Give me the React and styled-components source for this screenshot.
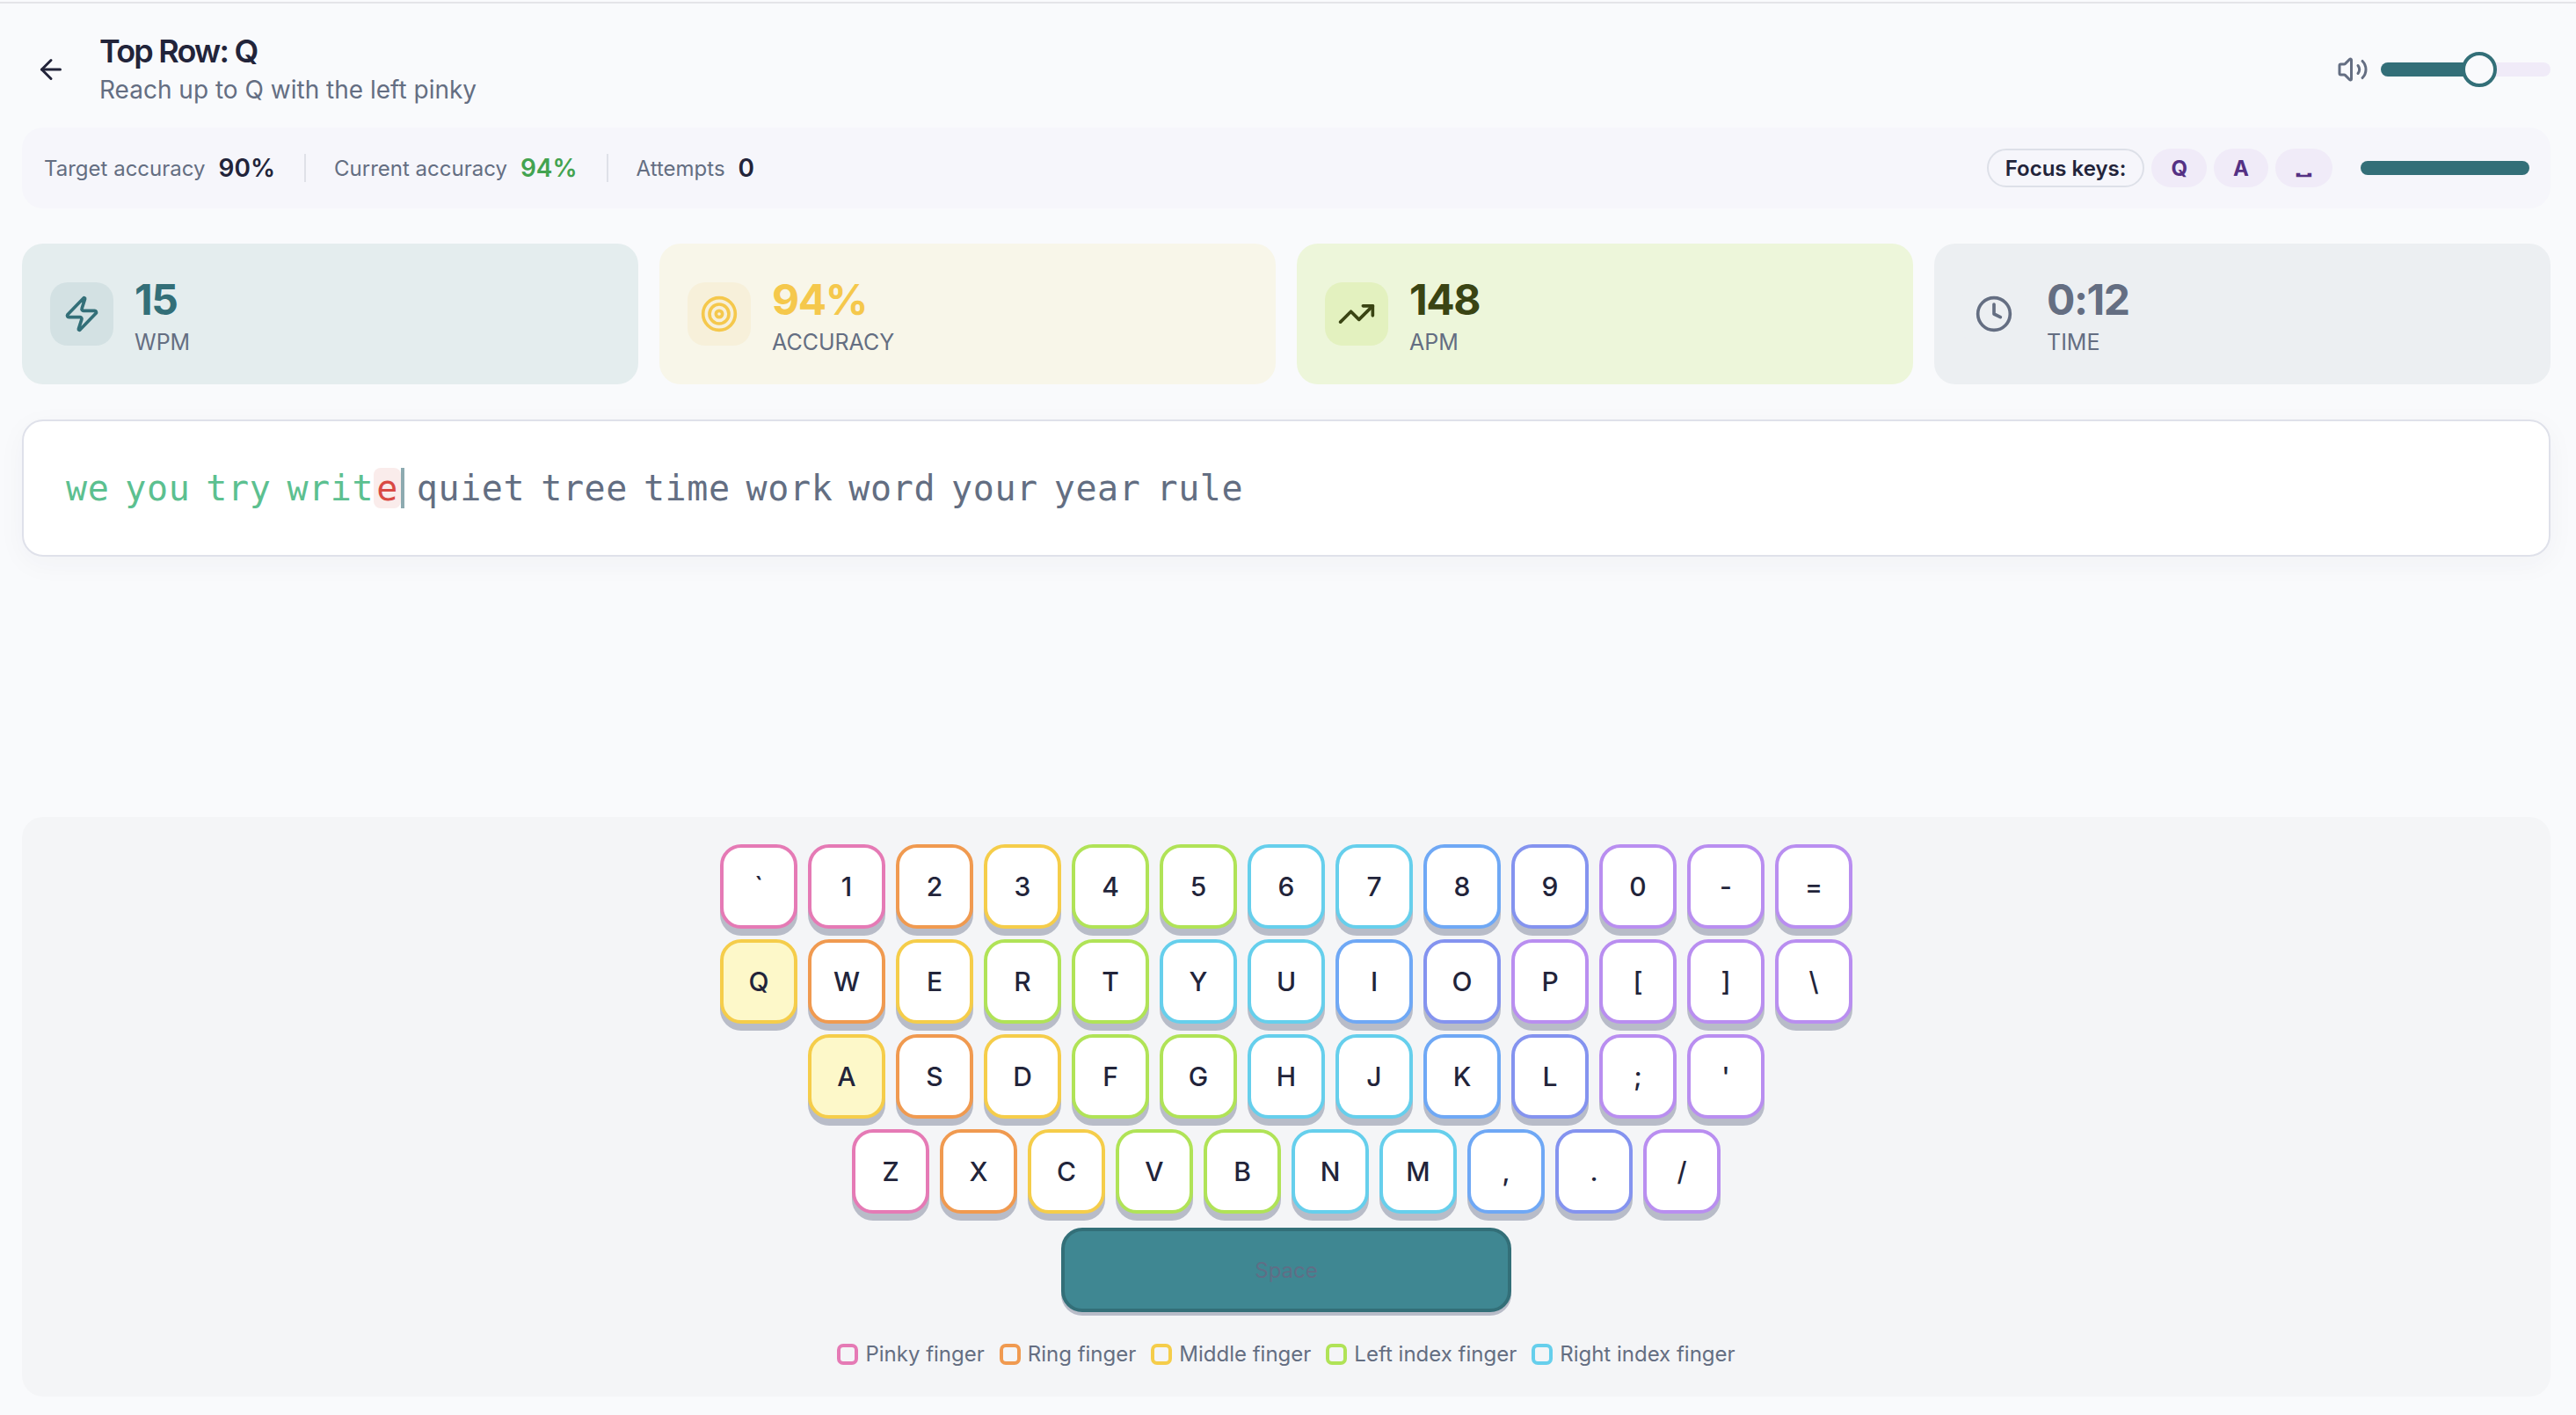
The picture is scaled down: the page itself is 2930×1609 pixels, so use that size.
import React from 'react';
import styled, { createGlobalStyle } from 'styled-components';
import { ArrowLeft, Volume2, Zap, Target, TrendingUp, Clock } from 'lucide-react';

const TEAL = '#336f78';
const SANS = `Inter, "Noto Sans", sans-serif`;

const fingers = {
  pinky: '#e57ab5',
  ring: '#f09a50',
  middle: '#f5cd4a',
  left: '#b0e357',
  right: '#66cfec',
  blue: '#6fa8f5',
  indigo: '#8493ef',
  purple: '#b98ef0',
};

const GlobalStyle = createGlobalStyle`
  html, body {
    margin: 0;
    background: #f9fafc;
    font-family: ${SANS};
    color: #22243a;
  }
`;

const Page = styled.div`
  width: 2930px;
  height: 1609px;
  overflow: hidden;
  display: flex;
  flex-direction: column;
`;

const TopRule = styled.div`
  margin-top: 2px;
  height: 2px;
  background: #e4e4e8;
`;

const Main = styled.main`
  display: flex;
  flex-direction: column;
  padding: 0 29px 0 25px;
`;

const Header = styled.header`
  height: 141px;
  padding: 9px 0 0 15px;
  box-sizing: border-box;
  display: flex;
  align-items: center;
  gap: 37px;
`;

const BackButton = styled.button`
  border: 0;
  padding: 0;
  background: none;
  color: #22243a;
  display: flex;
`;

const TitleBlock = styled.div`
  flex: 1;
`;

const Title = styled.h1`
  margin: 0 0 2px;
  font-size: 36px;
  line-height: 44px;
  font-weight: 600;
  letter-spacing: -0.05em;
`;

const Subtitle = styled.p`
  margin: 0;
  font-size: 28px;
  line-height: 40px;
  color: #646e82;
`;

const Volume = styled.div`
  display: flex;
  align-items: center;
  gap: 14px;
  color: #646e82;
`;

const SliderTrack = styled.div`
  position: relative;
  width: 193px;
  height: 16px;
  border-radius: 8px;
  background: #f0ebf8;
`;

const SliderFill = styled.div`
  height: 100%;
  border-radius: 8px;
  background: ${TEAL};
`;

const SliderThumb = styled.div`
  position: absolute;
  top: -12px;
  width: 40px;
  height: 40px;
  margin-left: -20px;
  box-sizing: border-box;
  border-radius: 50%;
  border: 4px solid ${TEAL};
  background: #f9fafc;
`;

const StatusBar = styled.section`
  height: 92px;
  padding: 0 24px 0 25px;
  box-sizing: border-box;
  display: flex;
  align-items: center;
  border-radius: 24px;
  background: #f6f6fb;
`;

const Metric = styled.div`
  display: flex;
  align-items: center;
  gap: 15px;
`;

const MetricLabel = styled.span`
  font-size: 24px;
  color: #646e82;
`;

const MetricValue = styled.span`
  font-size: 28px;
  font-weight: 600;
  color: ${(p) => p.$color || '#22243a'};
`;

const Divider = styled.span`
  width: 2px;
  height: 32px;
  margin: 0 32px 0 33px;
  background: #dfe1e8;
`;

const FocusGroup = styled.div`
  margin-left: auto;
  display: flex;
  align-items: center;
  gap: 8px;
`;

const FocusLabel = styled.span`
  height: 44px;
  padding: 0 19px;
  box-sizing: border-box;
  display: flex;
  align-items: center;
  border: 2px solid #dde0e8;
  border-radius: 22px;
  font-size: 24px;
  font-weight: 600;
`;

const FocusChip = styled.span`
  height: 44px;
  min-width: ${(p) => (p.$wide ? '65px' : '61px')};
  padding: 0 22px;
  box-sizing: border-box;
  display: flex;
  align-items: center;
  justify-content: center;
  border-radius: 22px;
  background: #f0ebf8;
  color: #553184;
  font-size: 24px;
  font-weight: 700;
`;

const SpaceGlyph = styled.span`
  display: inline-block;
  font-family: "DejaVu Sans", sans-serif;
  font-size: 28px;
  line-height: 1;
  transform: translateY(-2px) scale(1.5, 0.75);
`;

const ProgressBar = styled.div`
  width: 192px;
  height: 16px;
  margin-left: 32px;
  border-radius: 8px;
  background: ${TEAL};
`;

const StatGrid = styled.section`
  margin-top: 40px;
  display: grid;
  grid-template-columns: repeat(4, 1fr);
  gap: 24px;
`;

const StatCard = styled.div`
  height: 160px;
  padding: 0 32px;
  box-sizing: border-box;
  display: flex;
  align-items: center;
  gap: 24px;
  border-radius: 24px;
  background: ${(p) => p.$bg};
`;

const StatIcon = styled.div`
  width: 72px;
  height: 72px;
  display: flex;
  align-items: center;
  justify-content: center;
  border-radius: 20px;
  background: ${(p) => p.$bg};
  color: ${(p) => p.$color};
`;

const StatText = styled.div`
  padding-top: 4px;
`;

const StatValue = styled.div`
  font-size: 48px;
  line-height: 56px;
  font-weight: 700;
  letter-spacing: -0.03em;
  color: ${(p) => p.$color};
`;

const StatLabel = styled.div`
  margin-top: 4px;
  font-size: 25px;
  line-height: 32px;
  color: #646e82;
`;

const TypingBox = styled.section`
  margin-top: 40px;
  height: 156px;
  padding: 0 48px;
  box-sizing: border-box;
  display: flex;
  align-items: center;
  border: 2px solid #dfe1ea;
  border-radius: 24px;
  background: #fff;
  box-shadow: 0 8px 32px rgba(40, 50, 80, 0.04);
  font-family: "DejaVu Sans Mono", monospace;
  font-size: 40px;
  letter-spacing: 0.6px;
  word-spacing: -6.7px;
  white-space: pre;
  color: #636e82;
`;

const Typed = styled.span`
  color: #5cc090;
`;

const Wrong = styled.span`
  position: relative;
  padding: 0 3px;
  border-radius: 8px;
  background: #faeceb;
  color: #d94a44;

  &::after {
    content: '';
    position: absolute;
    top: 0;
    bottom: 0;
    right: -4px;
    width: 4px;
    background: #8daab0;
  }
`;

const KeyboardPanel = styled.section`
  margin-top: 296px;
  height: 659px;
  padding-top: 31px;
  box-sizing: border-box;
  display: flex;
  flex-direction: column;
  align-items: center;
  gap: 12px;
  border-radius: 24px;
  background: #f4f5f7;
`;

const KeyRow = styled.div`
  display: flex;
  gap: 12px;
`;

const Key = styled.div`
  width: 88px;
  height: 96px;
  box-sizing: border-box;
  display: flex;
  align-items: center;
  justify-content: center;
  border: 4px solid ${(p) => fingers[p.$finger]};
  border-radius: 24px;
  background: ${(p) => (p.$focus ? '#fdf8c9' : '#fff')};
  box-shadow: 0 8px 0 #b8bcc8;
  font-size: 30px;
  font-weight: 500;
  color: #22243a;
`;

const SpaceKey = styled.div`
  width: 512px;
  height: 96px;
  margin-top: 4px;
  box-sizing: border-box;
  display: flex;
  align-items: center;
  justify-content: center;
  border: 4px solid ${TEAL};
  border-radius: 24px;
  background: #3f8792;
  box-shadow: 0 4px 0 #b8bcc8;
  font-size: 24px;
  color: #5f6e86;
`;

const Legend = styled.div`
  margin-top: 20px;
  display: flex;
  gap: 17px;
`;

const LegendItem = styled.div`
  display: flex;
  align-items: center;
  gap: 8px;
  font-size: 24px;
  line-height: 32px;
  color: #646e82;
`;

const Swatch = styled.span`
  width: 24px;
  height: 24px;
  box-sizing: border-box;
  border: 4px solid ${(p) => fingers[p.$finger]};
  border-radius: 7px;
`;

const stats = [
  { icon: Zap, value: '15', label: 'WPM', bg: '#e4edee', iconBg: '#d3e1e3', color: TEAL },
  { icon: Target, value: '94%', label: 'ACCURACY', bg: '#f8f6e9', iconBg: '#f7f0da', color: '#f5c84c' },
  { icon: TrendingUp, value: '148', label: 'APM', bg: '#edf6da', iconBg: '#e3f1bf', color: '#3a4413' },
  { icon: Clock, value: '0:12', label: 'TIME', bg: '#eceff2', iconBg: '#eceff2', color: '#646e82' },
];

const rows = [
  [['`', 'pinky'], ['1', 'pinky'], ['2', 'ring'], ['3', 'middle'], ['4', 'left'], ['5', 'left'], ['6', 'right'], ['7', 'right'], ['8', 'blue'], ['9', 'indigo'], ['0', 'purple'], ['-', 'purple'], ['=', 'purple']],
  [['Q', 'middle', true], ['W', 'ring'], ['E', 'middle'], ['R', 'left'], ['T', 'left'], ['Y', 'right'], ['U', 'right'], ['I', 'blue'], ['O', 'indigo'], ['P', 'purple'], ['[', 'purple'], [']', 'purple'], ['\\', 'purple']],
  [['A', 'middle', true], ['S', 'ring'], ['D', 'middle'], ['F', 'left'], ['G', 'left'], ['H', 'right'], ['J', 'right'], ['K', 'blue'], ['L', 'indigo'], [';', 'purple'], ["'", 'purple']],
  [['Z', 'pinky'], ['X', 'ring'], ['C', 'middle'], ['V', 'left'], ['B', 'left'], ['N', 'right'], ['M', 'right'], [',', 'blue'], ['.', 'indigo'], ['/', 'purple']],
];

const legend = [
  ['pinky', 'Pinky finger'],
  ['ring', 'Ring finger'],
  ['middle', 'Middle finger'],
  ['left', 'Left index finger'],
  ['right', 'Right index finger'],
];

export default function App() {
  return (
    <Page>
      <GlobalStyle />
      <TopRule />
      <Main>
        <Header>
          <BackButton>
            <ArrowLeft size={36} strokeWidth={2} />
          </BackButton>
          <TitleBlock>
            <Title>Top Row: Q</Title>
            <Subtitle>Reach up to Q with the left pinky</Subtitle>
          </TitleBlock>
          <Volume>
            <Volume2 size={36} strokeWidth={2} />
            <SliderTrack>
              <SliderFill style={{ width: '58%' }} />
              <SliderThumb style={{ left: '58%' }} />
            </SliderTrack>
          </Volume>
        </Header>

        <StatusBar>
          <Metric>
            <MetricLabel>Target accuracy</MetricLabel>
            <MetricValue>90%</MetricValue>
          </Metric>
          <Divider />
          <Metric>
            <MetricLabel>Current accuracy</MetricLabel>
            <MetricValue $color="#43a350">94%</MetricValue>
          </Metric>
          <Divider />
          <Metric>
            <MetricLabel>Attempts</MetricLabel>
            <MetricValue>0</MetricValue>
          </Metric>
          <FocusGroup>
            <FocusLabel>Focus keys:</FocusLabel>
            <FocusChip>Q</FocusChip>
            <FocusChip>A</FocusChip>
            <FocusChip $wide>
              <SpaceGlyph>⎵</SpaceGlyph>
            </FocusChip>
          </FocusGroup>
          <ProgressBar />
        </StatusBar>

        <StatGrid>
          {stats.map((s) => (
            <StatCard key={s.label} $bg={s.bg}>
              <StatIcon $bg={s.iconBg} $color={s.color}>
                <s.icon size={44} strokeWidth={2} />
              </StatIcon>
              <StatText>
                <StatValue $color={s.color}>{s.value}</StatValue>
                <StatLabel>{s.label}</StatLabel>
              </StatText>
            </StatCard>
          ))}
        </StatGrid>

        <TypingBox>
          <Typed>we you try writ</Typed>
          <Wrong>e</Wrong>
          {' quiet tree time work word your year rule'}
        </TypingBox>

        <KeyboardPanel>
          {rows.map((row, i) => (
            <KeyRow key={i}>
              {row.map(([label, finger, focus]) => (
                <Key key={label} $finger={finger} $focus={focus}>
                  {label}
                </Key>
              ))}
            </KeyRow>
          ))}
          <SpaceKey>Space</SpaceKey>
          <Legend>
            {legend.map(([finger, label]) => (
              <LegendItem key={finger}>
                <Swatch $finger={finger} />
                {label}
              </LegendItem>
            ))}
          </Legend>
        </KeyboardPanel>
      </Main>
    </Page>
  );
}
